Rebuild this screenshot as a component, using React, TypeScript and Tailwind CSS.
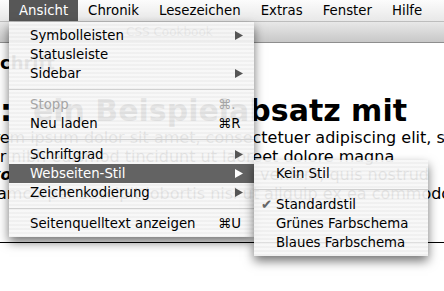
import React from 'react'

type Entry =
  | { sep: true }
  | { sep?: false; label: string; shortcut?: string; submenu?: boolean; disabled?: boolean; active?: boolean; checked?: boolean }

const mainMenu: Entry[] = [
  { label: 'Symbolleisten', submenu: true },
  { label: 'Statusleiste' },
  { label: 'Sidebar', submenu: true },
  { sep: true },
  { label: 'Stopp', shortcut: '⌘.', disabled: true },
  { label: 'Neu laden', shortcut: '⌘R' },
  { sep: true },
  { label: 'Schriftgrad', submenu: true },
  { label: 'Webseiten-Stil', submenu: true, active: true },
  { label: 'Zeichenkodierung', submenu: true },
  { sep: true },
  { label: 'Seitenquelltext anzeigen', shortcut: '⌘U' },
]

const styleMenu: Entry[] = [
  { label: 'Kein Stil' },
  { sep: true },
  { label: 'Standardstil', checked: true },
  { label: 'Grünes Farbschema' },
  { label: 'Blaues Farbschema' },
]

const menuBar = ['Ansicht', 'Chronik', 'Lesezeichen', 'Extras', 'Fenster', 'Hilfe']

const Arrow = ({ white }: { white?: boolean }) => (
  <svg width="8" height="9" viewBox="0 0 8 9">
    <path d="M0 0L8 4.5L0 9Z" fill={white ? '#ffffff' : '#555555'} />
  </svg>
)

// translucent pinstriped menu background
const menuBg =
  'bg-[repeating-linear-gradient(to_bottom,rgba(247,247,247,0.93)_0px,rgba(247,247,247,0.93)_2px,rgba(239,239,239,0.93)_2px,rgba(239,239,239,0.93)_4px)]'

const Separator = () => (
  <div className="flex h-[12px] items-center">
    <div className="h-px w-full bg-[#d0d0d0]" />
  </div>
)

const App = () => {
  return (
    <div className="relative h-[291px] w-[444px] overflow-hidden bg-white font-['DejaVu_Sans',sans-serif] text-black">
      {/* Menu bar */}
      <div className="flex h-[22px] items-stretch border-b border-[#bdbdbd] bg-gradient-to-b from-[#fcfcfc] to-[#e8e8e8] pl-[9px] text-[13.3px]">
        {menuBar.map((name) => (
          <div
            key={name}
            className={`flex items-center px-[10px] ${name === 'Ansicht' ? 'bg-[#575757] text-white' : ''}`}
          >
            {name}
          </div>
        ))}
      </div>

      {/* Window title bar */}
      <div className="h-[21px] border-b border-[#8e8e8e] bg-gradient-to-b from-[#e8e8e8] to-[#c8c8c8] pl-[126px] text-[12px] leading-[20px] text-[#222]">
        CSS Cookbook
      </div>

      {/* Page content */}
      <div className="h-[199px] overflow-hidden whitespace-nowrap pt-[9px]">
        <div className="-ml-[13px] text-[18px] font-bold leading-[22px]">Schrift</div>
        <div className="mt-[19px] whitespace-pre text-[30px] font-bold leading-[36px]">{':  ein Beispielabsatz mit'}</div>
        <div className="text-[16px] leading-[18.6px]">
          <div className="-ml-[25px]">Lorem ipsum dolor sit amet, consectetuer adipiscing elit, sed diam nonummy</div>
          <div className="-ml-[52px]">tempor nibh euismod tincidunt ut laoreet dolore magna</div>
          <div className="-ml-[117px]">
            aliquam erat <strong><em>volutpat</em></strong>. Ut wisi enim ad minim veniam, quis nostrud
          </div>
          <div className="-ml-[22px]">ullamcorper suscipit lobortis nisl ut aliquip ex ea commodo consequat.</div>
        </div>
      </div>
      <div className="border-t border-black" />

      {/* Ansicht menu */}
      <div className={`absolute left-[9px] top-[22px] z-10 w-[245px] py-[4px] text-[13.3px] shadow-[0_5px_10px_rgba(0,0,0,0.55)] ${menuBg}`}>
        {mainMenu.map((item, i) =>
          item.sep ? (
            <Separator key={i} />
          ) : (
            <div
              key={i}
              className={`flex h-[19px] items-center pl-[21px] pr-[11px] ${item.active ? 'bg-[#636363] text-white' : ''} ${item.disabled ? 'text-[#a5a5a5]' : ''}`}
            >
              <span className="flex-1">{item.label}</span>
              <span className="flex w-[25px] items-center">
                {item.shortcut && <span>{item.shortcut}</span>}
                {item.submenu && (
                  <span className="ml-auto flex">
                    <Arrow white={item.active} />
                  </span>
                )}
              </span>
            </div>
          )
        )}
      </div>

      {/* Webseiten-Stil submenu */}
      <div className={`absolute left-[254px] top-[160px] z-20 w-[174px] py-[4px] text-[13.3px] shadow-[0_5px_10px_rgba(0,0,0,0.55)] ${menuBg}`}>
        {styleMenu.map((item, i) =>
          item.sep ? (
            <Separator key={i} />
          ) : (
            <div key={i} className="flex h-[19px] items-center">
              <span className="w-[22px] pl-[7px] text-[#666]">{item.checked ? '✔' : ''}</span>
              <span>{item.label}</span>
            </div>
          )
        )}
      </div>
    </div>
  )
}

export default App
